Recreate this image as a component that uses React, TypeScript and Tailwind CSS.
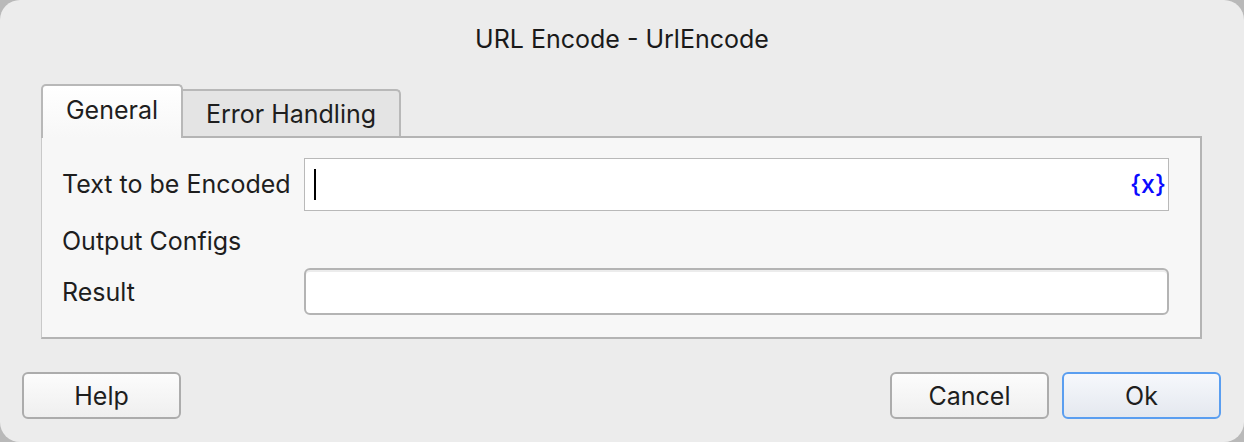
import React from "react";

// macOS-style "URL Encode" action dialog.
export default function App() {
  return (
    <div
      className="h-[442px] w-[1244px] bg-[#b9b9b9] text-[#1e1e1e]"
      style={{ fontFamily: "Inter, 'Liberation Sans', sans-serif" }}
    >
      <div className="flex h-full flex-col rounded-[20px] bg-[#ececec]">
        <div className="flex h-[84px] items-start justify-center pt-[24px] text-[25px] leading-[30px] text-[#1a1a1a]">
          URL Encode - UrlEncode
        </div>

        <div className="flex flex-col pl-[41px] pr-[42px]">
          <div className="flex items-end">
            <div className="relative z-10 -mb-[2px] flex h-[54px] w-[142px] items-center justify-center rounded-t-[5px] border-2 border-b-0 border-[#b8b8b8] bg-gradient-to-b from-white to-[#f7f7f7] pb-[2px] text-[25px]">
              General
            </div>
            <div className="-mb-[2px] flex h-[49px] w-[218px] items-center justify-center rounded-tr-[5px] border-2 border-l-0 border-b-0 border-[#b8b8b8] bg-[#e4e4e4] text-[25px]">
              Error Handling
            </div>
          </div>

          <div className="grid grid-cols-[242px_1fr] grid-rows-[53px_57px_47px] border-2 border-l border-[#b4b4b4] border-l-[#c9c9c9] bg-[#f7f7f7] pb-[22px] pl-[20px] pr-[31px] pt-[20px] text-[25px]">
            <div className="flex items-center pt-[1px]">Text to be Encoded</div>
            <div className="flex items-center justify-between border border-[#b9b9b9] bg-white pl-[9px] pr-[2px]">
              <span className="h-[31px] w-[2px] bg-black" />
              <span className="text-[25px] font-medium text-[#0a0aff]">{"{x}"}</span>
            </div>

            <div className="col-span-2 flex items-center pt-[4px]">Output Configs</div>

            <div className="flex items-center pt-[2px]">Result</div>
            <div className="rounded-[6px] border-2 border-[#b4b4b4] bg-white shadow-[inset_0_2px_0_#ececec]" />
          </div>
        </div>

        <div className="mt-[33px] flex items-center justify-between pl-[22px] pr-[23px]">
          <Btn label="Help" />
          <div className="flex gap-[13px]">
            <Btn label="Cancel" />
            <Btn label="Ok" primary />
          </div>
        </div>
      </div>
    </div>
  );
}

function Btn({ label, primary }: { label: string; primary?: boolean }) {
  return (
    <button
      className={
        primary
          ? "flex h-[47px] w-[159px] items-center justify-center rounded-[6px] border-2 border-[#5a9ef0] bg-gradient-to-b from-[#f6f8fc] to-[#e4e8ef] pt-[2px] text-[25px] text-[#1e1e1e]"
          : "flex h-[47px] w-[159px] items-center justify-center rounded-[6px] border-2 border-[#acacac] bg-gradient-to-b from-[#fcfcfc] to-[#efefef] pt-[2px] text-[25px] text-[#1e1e1e]"
      }
    >
      {label}
    </button>
  );
}
